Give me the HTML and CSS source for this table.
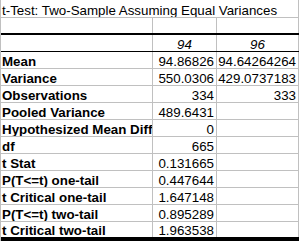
FILE: index.html
```html
<!DOCTYPE html>
<html>
<head>
<meta charset="utf-8">
<link rel="stylesheet" href="styles.css">
</head>
<body>
<div class="sheet">
  <div class="title">t-Test: Two-Sample Assuming Equal Variances</div>
  <div class="row blank"><div class="c"></div><div class="c"></div><div class="c"></div></div>
  <div class="row head"><div class="c"></div><div class="c it">94</div><div class="c it">96</div></div>
  <div class="row"><div class="c lbl">Mean</div><div class="c num">94.86826</div><div class="c num">94.64264264</div></div>
  <div class="row"><div class="c lbl">Variance</div><div class="c num">550.0306</div><div class="c num">429.0737183</div></div>
  <div class="row"><div class="c lbl">Observations</div><div class="c num">334</div><div class="c num">333</div></div>
  <div class="row"><div class="c lbl">Pooled Variance</div><div class="c num">489.6431</div><div class="c num"></div></div>
  <div class="row"><div class="c lbl">Hypothesized Mean Difference</div><div class="c num">0</div><div class="c num"></div></div>
  <div class="row"><div class="c lbl">df</div><div class="c num">665</div><div class="c num"></div></div>
  <div class="row"><div class="c lbl">t Stat</div><div class="c num">0.131665</div><div class="c num"></div></div>
  <div class="row"><div class="c lbl">P(T&lt;=t) one-tail</div><div class="c num">0.447644</div><div class="c num"></div></div>
  <div class="row"><div class="c lbl">t Critical one-tail</div><div class="c num">1.647148</div><div class="c num"></div></div>
  <div class="row"><div class="c lbl">P(T&lt;=t) two-tail</div><div class="c num">0.895289</div><div class="c num"></div></div>
  <div class="row last"><div class="c lbl">t Critical two-tail</div><div class="c num">1.963538</div><div class="c num"></div></div>
</div>
</body>
</html>
```

FILE: styles.css
```css
html, body {
  margin: 0;
  padding: 0;
  background: #ffffff;
  overflow: hidden;
}
.sheet {
  width: 298px;
  border-left: 1px solid #c0c0c0;
  font-family: "Liberation Sans", Arial, sans-serif;
  font-size: 13.33px;
  color: #000;
}
.title {
  box-sizing: border-box;
  height: 18px;
  padding: 3px 0 0 1px;
  line-height: 15px;
  border-bottom: 1px solid #c0c0c0;
  border-right: 1px solid #c0c0c0;
  white-space: nowrap;
  overflow: hidden;
}
.row {
  box-sizing: border-box;
  display: grid;
  grid-template-columns: 152px 64px 82px;
  height: 17px;
  border-bottom: 1px solid #c0c0c0;
}
.row.blank {
  border-bottom: 2px solid #000;
}
.row.head {
  border-bottom: 1px solid #000;
}
.row.last {
  height: 19px;
  border-bottom: 4px solid #000;
}
.c {
  box-sizing: border-box;
  border-right: 1px solid #c0c0c0;
  padding-top: 2px;
  line-height: 15px;
  white-space: nowrap;
  overflow: hidden;
}
.row.blank .c, .row.last .c {
  padding-top: 1px;
}
.lbl {
  font-weight: bold;
  padding-left: 1px;
}
.num {
  text-align: right;
  padding-right: 2px;
}
.it {
  font-style: italic;
  text-align: center;
}
```
